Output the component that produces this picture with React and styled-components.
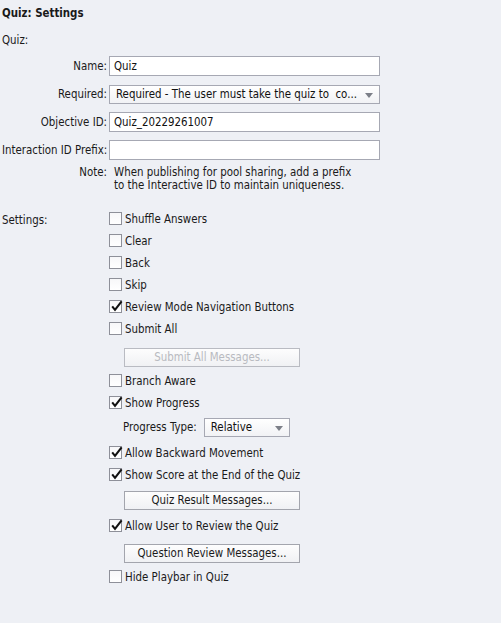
import React from "react";
import styled, { createGlobalStyle } from "styled-components";

const GlobalStyle = createGlobalStyle`
  html, body {
    margin: 0;
    padding: 0;
    background: #eef0f5;
  }
  body {
    font-family: "DejaVu Sans Condensed", "DejaVu Sans", sans-serif;
    font-size: 11.4px;
    color: #1a1a1a;
  }
`;

const Panel = styled.div`
  width: 501px;
  height: 623px;
  padding: 0 2px;
  box-sizing: border-box;
  background: #eef0f5;
`;

const Title = styled.div`
  height: 26px;
  line-height: 27px;
  font-weight: bold;
`;

const SectionLabel = styled.div`
  height: 26px;
  line-height: 29px;
`;

const FieldRow = styled.div`
  display: grid;
  grid-template-columns: 105px 271px;
  column-gap: 2px;
  align-items: center;
  height: 28px;
`;

const FieldLabel = styled.label`
  text-align: right;
  white-space: nowrap;
`;

const TextBox = styled.div`
  height: 20px;
  box-sizing: border-box;
  border: 1px solid #a6a8b3;
  background: #fff;
  padding: 0 4px;
  line-height: 18px;
  color: #111;
`;

const Select = styled.div`
  position: relative;
  width: ${(p) => p.$width || "auto"};
  height: 19px;
  box-sizing: border-box;
  border: 1px solid #a6a8b3;
  background: linear-gradient(#ffffff, #f1f2f5);
  padding: 0 20px 0 6px;
  line-height: 17px;
  white-space: nowrap;
  overflow: hidden;
  color: #111;

  &::after {
    content: "";
    position: absolute;
    right: 6px;
    top: 7px;
    border-left: 4px solid transparent;
    border-right: 4px solid transparent;
    border-top: 5px solid #7c7f88;
  }
`;

const NoteRow = styled.div`
  display: grid;
  grid-template-columns: 105px 271px;
  column-gap: 7px;
  padding-top: 2px;
  line-height: 13px;
`;

const Settings = styled.div`
  display: grid;
  grid-template-columns: 107px 1fr;
  margin-top: 15px;
`;

const SettingsLabel = styled.div`
  line-height: 22px;
  padding-top: 2px;
`;

const Options = styled.div`
  display: flex;
  flex-direction: column;
`;

const CheckRow = styled.div`
  display: flex;
  align-items: center;
  height: 22px;
  gap: 3px;
`;

const CheckText = styled.span`
  padding-top: 2px;
`;

const Box = styled.span`
  position: relative;
  width: 13px;
  height: 13px;
  box-sizing: border-box;
  border: 1px solid #8e9099;
  background: linear-gradient(#f7f7f9, #ffffff);
  flex: none;
`;

const ButtonSlot = styled.div`
  height: ${(p) => p.$h}px;
  padding-top: ${(p) => p.$top}px;
  padding-left: 15px;
  box-sizing: border-box;
`;

const PushButton = styled.div`
  width: 176px;
  height: 19px;
  box-sizing: border-box;
  border: 1px solid ${(p) => (p.$disabled ? "#b9bbc2" : "#a3a5ad")};
  background: linear-gradient(#fdfdfd, #f0f1f4);
  text-align: center;
  line-height: 17px;
  color: ${(p) => (p.$disabled ? "#b8bac0" : "#1a1a1a")};
`;

const SubRow = styled.div`
  display: flex;
  align-items: center;
  height: 28px;
  padding-left: 14px;
  gap: 7px;
`;

function Tick() {
  return (
    <svg width="13" height="13" viewBox="0 0 13 13" style={{ position: "absolute", left: 0, top: -1 }}>
      <path d="M2.2 6.4 L5 9.8 L11.6 1.4" fill="none" stroke="#111" strokeWidth="2.1" />
    </svg>
  );
}

function Check({ checked, children }) {
  return (
    <CheckRow>
      <Box>{checked && <Tick />}</Box>
      <CheckText>{children}</CheckText>
    </CheckRow>
  );
}

export default function App() {
  return (
    <Panel>
      <GlobalStyle />
      <Title>Quiz: Settings</Title>
      <SectionLabel>Quiz:</SectionLabel>
      <FieldRow>
        <FieldLabel>Name:</FieldLabel>
        <TextBox>Quiz</TextBox>
      </FieldRow>
      <FieldRow>
        <FieldLabel>Required:</FieldLabel>
        <Select>Required - The user must take the quiz to&nbsp; co...</Select>
      </FieldRow>
      <FieldRow>
        <FieldLabel>Objective ID:</FieldLabel>
        <TextBox>Quiz_20229261007</TextBox>
      </FieldRow>
      <FieldRow>
        <FieldLabel>Interaction ID Prefix:</FieldLabel>
        <TextBox />
      </FieldRow>
      <NoteRow>
        <FieldLabel>Note:</FieldLabel>
        <div>
          When publishing for pool sharing, add a prefix
          <br />
          to the Interactive ID to maintain uniqueness.
        </div>
      </NoteRow>
      <Settings>
        <SettingsLabel>Settings:</SettingsLabel>
        <Options>
          <Check>Shuffle Answers</Check>
          <Check>Clear</Check>
          <Check>Back</Check>
          <Check>Skip</Check>
          <Check checked>Review Mode Navigation Buttons</Check>
          <Check>Submit All</Check>
          <ButtonSlot $h={30} $top={9}>
            <PushButton $disabled>Submit All Messages...</PushButton>
          </ButtonSlot>
          <Check>Branch Aware</Check>
          <Check checked>Show Progress</Check>
          <SubRow>
            <span>Progress Type:</span>
            <Select $width="86px">Relative</Select>
          </SubRow>
          <Check checked>Allow Backward Movement</Check>
          <Check checked>Show Score at the End of the Quiz</Check>
          <ButtonSlot $h={29} $top={6}>
            <PushButton>Quiz Result Messages...</PushButton>
          </ButtonSlot>
          <Check checked>Allow User to Review the Quiz</Check>
          <ButtonSlot $h={29} $top={8}>
            <PushButton>Question Review Messages...</PushButton>
          </ButtonSlot>
          <Check>Hide Playbar in Quiz</Check>
        </Options>
      </Settings>
    </Panel>
  );
}
